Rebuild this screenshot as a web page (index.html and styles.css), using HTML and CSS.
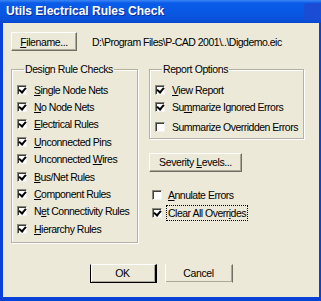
FILE: index.html
```html
<!DOCTYPE html>
<html lang="en">
<head>
  <meta charset="UTF-8" />
  <title>Utils Electrical Rules Check</title>
  <link rel="stylesheet" href="styles.css">
</head>
<body>

  <div class="window">
    <div class="titlebar">
      <span class="title">Utils Electrical Rules Check</span>
      <span class="tb-btn"></span>
    </div>

    <div class="client">
      <div class="file-row">
        <button class="btn btn-file"><u>F</u>ilename...</button>
        <span class="path">D:\Program Files\P-CAD 2001\..\Digdemo.eic</span>
      </div>

      <div class="main">
        <fieldset class="group group-rules">
          <legend>Design Rule Checks</legend>
          <label class="check"><span class="box on"></span><span><u>S</u>ingle Node Nets</span></label>
          <label class="check"><span class="box on"></span><span><u>N</u>o Node Nets</span></label>
          <label class="check"><span class="box on"></span><span><u>E</u>lectrical Rules</span></label>
          <label class="check"><span class="box on"></span><span><u>U</u>nconnected Pins</span></label>
          <label class="check"><span class="box on"></span><span>Unconnected <u>W</u>ires</span></label>
          <label class="check"><span class="box on"></span><span><u>B</u>us/Net Rules</span></label>
          <label class="check"><span class="box on"></span><span><u>C</u>omponent Rules</span></label>
          <label class="check"><span class="box on"></span><span>N<u>e</u>t Connectivity Rules</span></label>
          <label class="check"><span class="box on"></span><span><u>H</u>ierarchy Rules</span></label>
        </fieldset>

        <div class="side">
          <fieldset class="group group-report">
            <legend>Report Options</legend>
            <label class="check"><span class="box on"></span><span><u>V</u>iew Report</span></label>
            <label class="check"><span class="box on"></span><span>Su<u>m</u>marize Ignored Errors</span></label>
            <label class="check check-gap"><span class="box"></span><span>Summarize Overridden Errors</span></label>
          </fieldset>

          <button class="btn btn-sev">Severity <u>L</u>evels...</button>

          <div class="extra">
            <label class="check"><span class="box"></span><span><u>A</u>nnulate Errors</span></label>
            <label class="check"><span class="box on"></span><span class="focus">Clear All Overr<u>i</u>des</span></label>
          </div>
        </div>
      </div>

      <div class="actions">
        <button class="btn btn-ok">OK</button>
        <button class="btn btn-cancel">Cancel</button>
      </div>
    </div>
  </div>

</body>
</html>
```

FILE: styles.css
```css
body {
  margin: 0;
  font-family: "Liberation Sans", Arial, sans-serif;
  font-size: 10.5px;
  color: #000;
  background: #fff;
}

.window {
  width: 321px;
  height: 301px;
  box-sizing: border-box;
  padding: 0 2px 4px 3px;
  background: #0841d8;
  display: flex;
  flex-direction: column;
  overflow: hidden;
}

.titlebar {
  height: 23px;
  margin: 0 -2px 0 -3px;
  padding-left: 6px;
  display: flex;
  align-items: center;
  background: linear-gradient(#3b86f5 0, #0a5ce8 3px, #0858e4 12px, #0a50d8 20px, #0845cc 23px);
}

.title {
  color: #fff;
  font-weight: bold;
  font-size: 12px;
  text-shadow: 1px 1px 0 #0a2a9a;
  padding-bottom: 1px;
}

.tb-btn {
  margin-left: auto;
  width: 17px;
  height: 17px;
  border-radius: 4px 0 0 4px;
  background: #1a4cd4;
}

.client {
  flex: 1;
  background: #ece9d8;
  padding: 9px 0 0 8px;
  display: flex;
  flex-direction: column;
}

u {
  text-decoration: underline;
}

/* buttons */
.btn {
  font-family: inherit;
  font-size: 10.5px;
  color: #000;
  background: #ece9d8;
  border: 1px solid;
  border-color: #fff #716f64 #716f64 #fff;
  box-shadow: inset -1px -1px 0 #aca899;
  height: 19px;
  padding: 0;
  letter-spacing: -0.4px;
}

.file-row {
  display: flex;
  align-items: center;
}

.btn-file {
  width: 66px;
}

.path {
  margin-left: 15px;
  letter-spacing: -0.5px;
}

/* groups */
.main {
  display: flex;
  gap: 11px;
  margin-top: 12px;
}

.group {
  margin: 0;
  padding: 5px 0 4px 5px;
  border: 1px solid #b5b2a3;
  box-shadow: inset 1px 1px 0 #fff, 1px 1px 0 #fff;
  min-width: 0;
}

.group legend {
  padding: 0 1px;
  margin-left: 7px;
  line-height: 13px;
  letter-spacing: -0.4px;
}

.group-rules {
  width: 127px;
  box-sizing: border-box;
}

.side {
  width: 155px;
  display: flex;
  flex-direction: column;
}

.group-report {
  padding-bottom: 2px;
}

.check {
  display: flex;
  align-items: center;
  gap: 7px;
  height: 17.4px;
  letter-spacing: -0.5px;
  white-space: nowrap;
}

.check-gap {
  margin-top: 2.5px;
}

.box {
  width: 10px;
  height: 10px;
  box-sizing: border-box;
  flex: none;
  background: #fff;
  border: 1px solid;
  border-color: #8a8878 #f4f3ee #f4f3ee #8a8878;
  box-shadow: inset 1px 1px 0 #3c3c3c;
  position: relative;
}

.box.on::after {
  content: "";
  position: absolute;
  left: 2px;
  top: 0px;
  width: 3px;
  height: 5px;
  border: solid #000;
  border-width: 0 2px 2px 0;
  transform: rotate(40deg);
}

.btn-sev {
  margin-top: 14px;
  width: 93px;
}

.extra {
  margin-top: 15px;
  padding-left: 3px;
}

.extra .check {
  gap: 6px;
}

.focus {
  outline: 1px dotted #000;
  outline-offset: 1px;
}

/* bottom buttons */
.actions {
  display: flex;
  justify-content: center;
  gap: 8px;
  margin-top: 21px;
  margin-left: -8px;
}

.btn-ok {
  width: 67px;
  border: 1px solid #000;
  border-top-color: #fff;
  border-right-width: 2px;
  box-shadow: inset 1px 0 0 #fff, inset -1px -1px 0 #aca899;
}

.btn-cancel {
  width: 68px;
  border-top-color: #ece9d8;
  border-bottom-color: #ece9d8;
}
```
